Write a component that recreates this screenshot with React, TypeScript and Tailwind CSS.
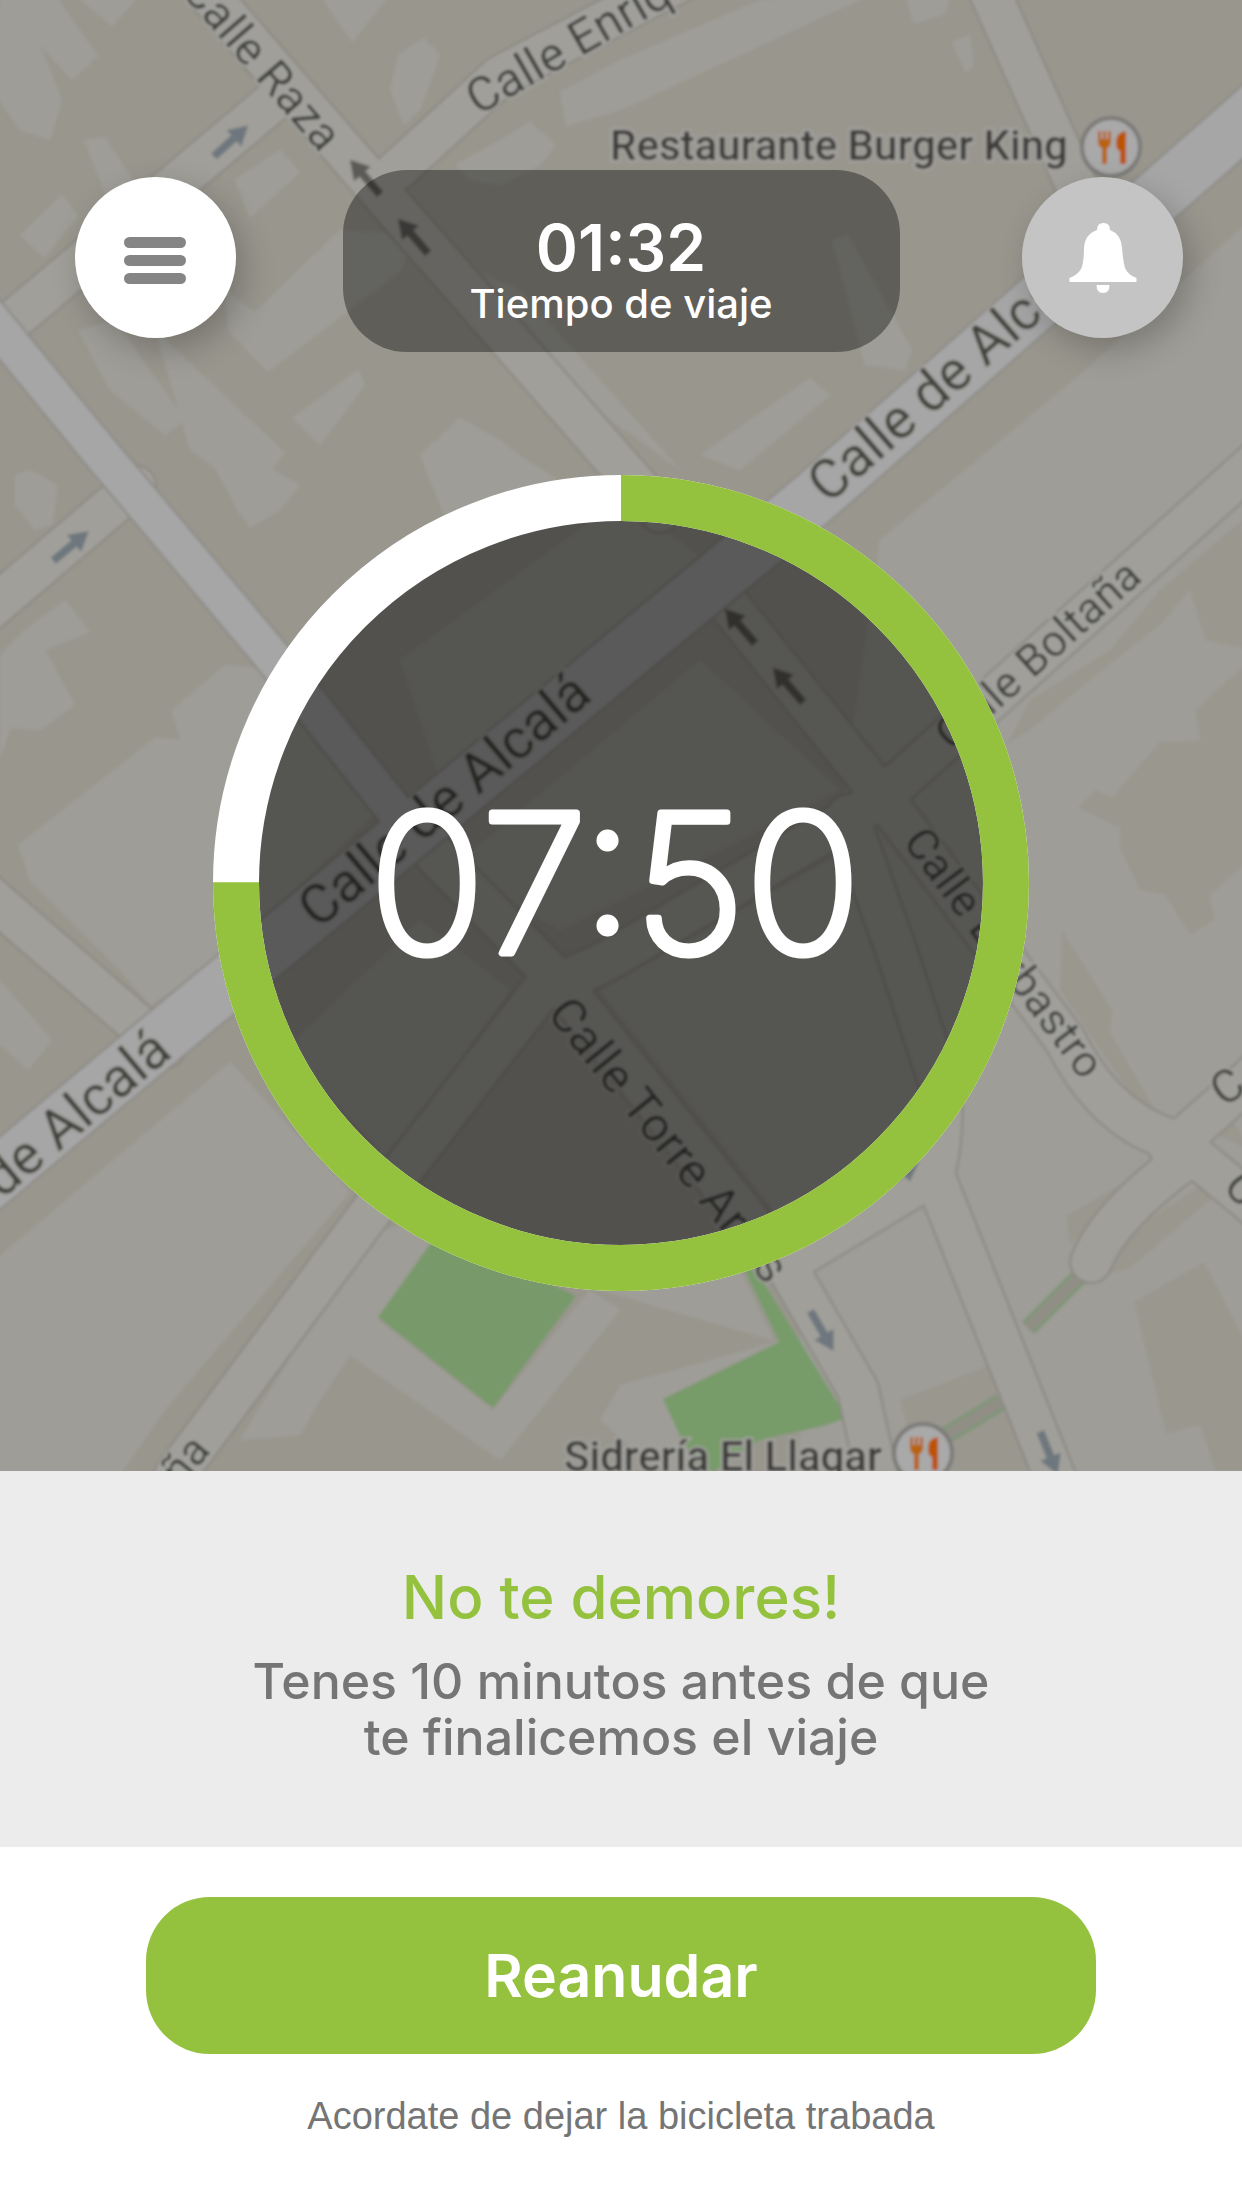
const PROGRESS = 0.75;

const RADIUS = 385;
const CIRCUMFERENCE = 2 * Math.PI * RADIUS;

const MINOR_ROADS = [
  "M205 -10 L380 192 L660 512",
  "M275 100 L-20 348",
  "M395 172 L500 76 L740 -50",
  "M988 -12 L1085 205",
  "M-20 618 L135 486",
  "M-20 888 L165 1048",
  "M725 600 L885 800 L1065 1040 Q1110 1130 1190 1144",
  "M1260 458 L890 790 L860 812 L605 962 L540 992 L372 1210 L175 1475",
  "M430 850 L560 982 L790 1272 L858 1390 L880 1490",
  "M848 815 L896 950 L940 1085 Q945 1130 934 1175 L1060 1490",
  "M934 1175 L790 1262",
  "M1170 1150 L1260 1070",
  "M1180 1144 L1260 1210",
  "M1185 1160 Q1110 1215 1091 1262",
];

const MAIN_ROADS = [
  "M1270 98 L813 499 L195 1010 L-30 1198",
  "M-20 306 L100 452 L275 660 L410 830",
];

const BUILDINGS = [
  "M0 -5 L55 -5 L98 56 L72 80 L40 45 L62 100 L50 140 L20 130 L-5 95Z",
  "M75 -5 L140 -5 L112 26Z",
  "M320 -5 L390 -5 L352 42Z",
  "M390 90 L398 55 L424 38 L440 55 L420 110 L404 125Z",
  "M560 92 L621 60 L760 0 L870 -5 L621 110 L566 126Z",
  "M455 165 L500 140 L530 122 L556 145 L540 165 L500 185 L470 180Z",
  "M905 -5 L950 -5 L945 14 L914 24Z",
  "M952 42 L970 35 L974 65 L966 73Z",
  "M84 140 L105 138 L132 178 L108 200Z",
  "M235 180 L280 150 L300 172 L250 218Z",
  "M20 235 L62 195 L78 216 L44 258Z",
  "M225 290 L255 312 L340 230 L410 235 L402 270 L268 372 L228 330Z",
  "M78 330 L115 320 L185 420 L165 435 L110 390Z",
  "M155 330 L285 453 L255 490 L240 515 L215 468 L190 450Z",
  "M292 418 L358 370 L365 385 L320 445Z",
  "M420 455 L460 418 L500 440 L520 456 L590 500 L500 530 L450 530Z",
  "M430 250 L520 290 L680 470 L640 440 L580 400Z",
  "M15 475 L30 470 L58 485 L52 525 L35 530 L15 505Z",
  "M232 500 L265 465 L300 485 L280 510 L250 528Z",
  "M0 655 L25 630 L65 600 L90 632 L45 650 L75 705 L40 730 L10 728 L0 760Z",
  "M18 845 L155 738 L180 740 L172 710 L225 665 L270 670 L390 800 L220 960 L150 1005 L120 970 L30 880Z",
  "M-5 975 L52 1040 L28 1070 L-5 1040Z",
  "M-5 1260 L230 1062 L350 1192 L165 1410 L120 1475 L-5 1475Z",
  "M365 1235 L440 1215 L430 1260 L378 1320 L493 1410 L590 1290 L620 1310 L500 1460 L350 1355 L320 1400 L300 1435 L240 1440Z",
  "M600 1290 L740 1270 L775 1342 L621 1385 L600 1420 L660 1471 L720 1471 L663 1399 L779 1342Z",
  "M832 240 L848 235 L912 350 L905 370 L865 365Z",
  "M700 455 L810 378 L830 395 L740 470Z",
  "M880 540 L1080 375 L1250 220 L1250 1480 L800 1480 L800 1100Z",
  "M400 660 L620 500 L720 570 L450 810Z",
  "M450 870 L700 660 L840 790 L560 930Z",
  "M285 1050 L420 920 L510 990 L390 1160Z",
  "M600 990 L830 860 L910 1080 L900 1150 L790 1230Z",
];

const OPEN_GROUND = [
  "M1006 745 L1030 700 L1110 650 L1160 590 L1242 520 L1250 650 L1205 640 L1190 590 L1160 625 L1100 672 L1030 730Z",
  "M1078 808 L1095 790 L1112 797 L1160 742 L1200 740 L1195 710 L1250 660 L1250 860 L1210 895 L1215 920 L1190 935 L1165 895 L1140 890 L1120 850 L1120 828Z",
  "M1062 930 L1112 1010 L1110 1032 L1160 1118 L1152 1126 L1060 990Z",
  "M1066 1216 L1154 1165 L1100 1215 L1070 1245Z",
  "M1200 1185 L1222 1190 L1130 1268 L1104 1275 L1130 1232Z",
  "M1134 1302 L1204 1262 L1250 1350 L1250 1471 L1215 1471 L1200 1425 L1166 1434Z",
  "M900 1400 L990 1365 L1030 1471 L945 1471 L908 1430Z",
  "M1205 1130 L1228 1112 L1250 1150Z",
];

type StreetLabelProps = {
  x: number;
  y: number;
  angle: number;
  size: number;
  anchor?: "start" | "end";
  children: string;
};

function StreetLabel({ x, y, angle, size, anchor = "start", children }: StreetLabelProps) {
  return (
    <text
      transform={`translate(${x} ${y}) rotate(${angle})`}
      fontSize={size}
      textAnchor={anchor}
      fill="#413f3b"
      stroke="#a5a5a2"
      strokeWidth="4"
      paintOrder="stroke"
    >
      {children}
    </text>
  );
}

function MapArrow({ x, y, angle, color = "#6d777d" }: { x: number; y: number; angle: number; color?: string }) {
  return (
    <path
      transform={`translate(${x} ${y}) rotate(${angle})`}
      d="M-23 -4 H4 V-11 L23 0 L4 11 V4 H-23Z"
      fill={color}
    />
  );
}

function RestaurantPin({ x, y }: { x: number; y: number }) {
  return (
    <g transform={`translate(${x} ${y})`}>
      <circle r="29" fill="#a9a9a9" stroke="#7b7a78" strokeWidth="4" />
      <path
        d="M-13 -16 V-6 Q-13 0 -9 1 V17 H-4 V1 Q0 0 0 -6 V-16 H-3 V-8 H-5 V-16 H-8 V-8 H-10 V-16Z"
        fill="#b8640c"
      />
      <path d="M15 -16 Q5 -15 5 -4 Q5 3 9 4 V17 H15Z" fill="#bb5200" />
    </g>
  );
}

function StreetMap() {
  return (
    <svg
      className="absolute inset-0 h-full w-full"
      viewBox="0 0 1242 1471"
      preserveAspectRatio="xMidYMid slice"
      fontFamily="Roboto, 'Liberation Sans', sans-serif"
      aria-hidden="true"
    >
      <defs>
        <filter id="soften" x="0" y="0" width="100%" height="100%">
          <feGaussianBlur stdDeviation="1.8" />
        </filter>
      </defs>
      <rect width="1242" height="1471" fill="#99968e" />
      <g filter="url(#soften)">
        <rect width="1242" height="1471" fill="#99968e" />
        {BUILDINGS.map((d) => (
          <path key={d} d={d} fill="#9e9d97" />
        ))}
        {OPEN_GROUND.map((d) => (
          <path key={d} d={d} fill="#9a978f" />
        ))}

        {/* Parks */}
        <path d="M440 1230 L378 1317 L493 1408 L576 1296Z" fill="#78996b" />
        <path
          d="M735 1250 L779 1342 L663 1399 L680 1436 L700 1471 H715 L760 1440 L823 1426 L847 1418 L763 1281Z"
          fill="#789b6b"
        />
        <path d="M1080 1276 L1028 1328 M1001 1402 L945 1436" stroke="#82957a" strokeWidth="18" />
        <path d="M1080 1276 L1028 1328 M1001 1402 L945 1436" stroke="#918e86" strokeWidth="10" />

        <g fill="none" strokeLinejoin="round" strokeLinecap="round">
          {MINOR_ROADS.map((d) => (
            <path key={d} d={d} stroke="#8b8881" strokeWidth="44" />
          ))}
          {MINOR_ROADS.map((d) => (
            <path key={d} d={d} stroke="#a09f9a" strokeWidth="40" />
          ))}
          {MAIN_ROADS.map((d, i) => (
            <path key={d} d={d} stroke="#8c8a83" strokeWidth={i === 0 ? 58 : 40} />
          ))}
          {MAIN_ROADS.map((d, i) => (
            <path key={d} d={d} stroke="#a6a6a7" strokeWidth={i === 0 ? 54 : 36} />
          ))}
        </g>

        <MapArrow x={231} y={141} angle={-42} />
        <MapArrow x={71} y={546} angle={-40} />
        <MapArrow x={365} y={177} angle={-131} color="#5c5a57" />
        <MapArrow x={413} y={236} angle={-131} color="#5c5a57" />
        <MapArrow x={740} y={626} angle={-131} color="#5c5a57" />
        <MapArrow x={788} y={685} angle={-131} color="#5c5a57" />
        <MapArrow x={822} y={1331} angle={60} />
        <MapArrow x={900} y={1175} angle={-35} />
        <MapArrow x={1049} y={1453} angle={68} />

        <StreetLabel x={180} y={-8} angle={49} size={46}>Calle Raza</StreetLabel>
        <StreetLabel x={478} y={116} angle={-30} size={48}>Calle Enrique</StreetLabel>
        <StreetLabel x={828} y={505} angle={-41} size={55}>Calle de Alcalá</StreetLabel>
        <StreetLabel x={318} y={930} angle={-40} size={55}>Calle de Alcalá</StreetLabel>
        <StreetLabel x={174} y={1055} angle={-40} size={55} anchor="end">de Alcalá</StreetLabel>
        <StreetLabel x={952} y={752} angle={-42} size={44}>Calle Boltaña</StreetLabel>
        <StreetLabel x={212} y={1451} angle={-50} size={44} anchor="end">ña</StreetLabel>
        <StreetLabel x={902} y={842} angle={53} size={44}>Calle Barbastro</StreetLabel>
        <StreetLabel x={546} y={1014} angle={51} size={48}>Calle Torre Arias</StreetLabel>
        <StreetLabel x={1224} y={1108} angle={-35} size={46}>C</StreetLabel>
        <StreetLabel x={1222} y={1186} angle={52} size={46}>C</StreetLabel>

        <g fill="#3d3b38" stroke="#a5a5a2" strokeWidth="4" paintOrder="stroke" fontSize="42" fontWeight="500">
          <text x="610" y="160">Restaurante Burger King</text>
          <text x="564" y="1471">Sidrería El Llagar</text>
        </g>
        <RestaurantPin x={1111} y={147} />
        <RestaurantPin x={923} y={1453} />
      </g>
    </svg>
  );
}

function MenuIcon() {
  return (
    <svg className="h-12 w-16" viewBox="0 0 64 48" fill="#858585" aria-hidden="true">
      <rect x="0" y="0" width="62" height="11" rx="5.5" />
      <rect x="0" y="18" width="62" height="11" rx="5.5" />
      <rect x="0" y="36" width="62" height="11" rx="5.5" />
    </svg>
  );
}

function BellIcon() {
  return (
    <svg className="h-[70px] w-[68px]" viewBox="0 0 68 70" fill="#ffffff" aria-hidden="true">
      <path d="M28 7 Q28 0 34.500 0 Q41 0 41 7 Q52 11 53 25 Q54 38 56 45 Q59 52 67.500 55 V59 H0.500 V55 Q9 52 12.500 45 Q15 38 15 25 Q16 11 28 7Z" />
      <path d="M27.500 62 H40.500 Q40.500 70 34 70 Q27.500 70 27.500 62Z" />
    </svg>
  );
}

function CountdownRing({ time }: { time: string }) {
  return (
    <svg className="block w-[816px] max-w-full" viewBox="0 0 816 816" role="timer" aria-label={time}>
      <circle cx="408" cy="408" r="364" fill="#000000" fillOpacity="0.46" />
      <circle cx="408" cy="408" r={RADIUS} fill="none" stroke="#ffffff" strokeWidth="46" />
      <circle
        cx="408"
        cy="408"
        r={RADIUS}
        fill="none"
        stroke="#94c23f"
        strokeWidth="46"
        strokeDasharray={`${CIRCUMFERENCE * PROGRESS} ${CIRCUMFERENCE}`}
        transform="rotate(-90 408 408)"
      />
      <text
        x="402"
        y="478"
        textAnchor="middle"
        fontFamily="Inter, sans-serif"
        fontSize="192"
        fontWeight="200"
        fill="#ffffff"
        stroke="#ffffff"
        strokeWidth="7"
        strokeLinejoin="round"
      >
        {time}
      </text>
    </svg>
  );
}

export default function App() {
  return (
    <div className="flex min-h-screen flex-col bg-white font-['Inter',sans-serif]">
      <section className="relative overflow-hidden pb-[180px]">
        <StreetMap />

        <div className="relative flex flex-col items-center">
          <header className="grid w-full grid-cols-[1fr_auto_1fr] items-start pt-[170px]">
            <button
              type="button"
              aria-label="Menú"
              className="mt-[7px] ml-[75px] flex size-[161px] items-center justify-center rounded-full bg-white pt-[6px] shadow-[8px_12px_32px_rgba(0,0,0,0.22)]"
            >
              <MenuIcon />
            </button>
            <div className="flex h-[182px] w-[557px] flex-col items-center rounded-[64px] bg-black/37 pt-[46px] text-white">
              <span className="text-[64px] leading-[64px] font-semibold">01:32</span>
              <span className="text-[40px] leading-[48px] font-medium">Tiempo de viaje</span>
            </div>
            <button
              type="button"
              aria-label="Notificaciones"
              className="mt-[7px] mr-[59px] flex size-[161px] items-center justify-center justify-self-end rounded-full bg-[#c4c4c4] shadow-[8px_12px_32px_rgba(0,0,0,0.22)]"
            >
              <BellIcon />
            </button>
          </header>

          <div className="mt-[123px]">
            <CountdownRing time="07:50" />
          </div>
        </div>
      </section>

      <section className="bg-[#ececec] px-16 pt-[90px] pb-[82px] text-center">
        <h1 className="text-[60px] leading-[72px] font-medium text-[#94c23f]">No te demores!</h1>
        <p className="mt-5 text-[50px] leading-[56px] font-medium text-[#757575]">
          Tenes 10 minutos antes de que
          <br />
          te finalicemos el viaje
        </p>
      </section>

      <section className="flex flex-1 flex-col items-center px-[146px] pt-[50px] pb-16">
        <button
          type="button"
          className="h-[157px] w-full rounded-[64px] bg-[#94c23f] text-[59px] leading-[64px] font-semibold text-white"
        >
          Reanudar
        </button>
        <p className="mt-10 font-['Liberation_Sans',sans-serif] text-[38px] leading-[44px] text-[#757575]">
          Acordate de dejar la bicicleta trabada
        </p>
      </section>
    </div>
  );
}
